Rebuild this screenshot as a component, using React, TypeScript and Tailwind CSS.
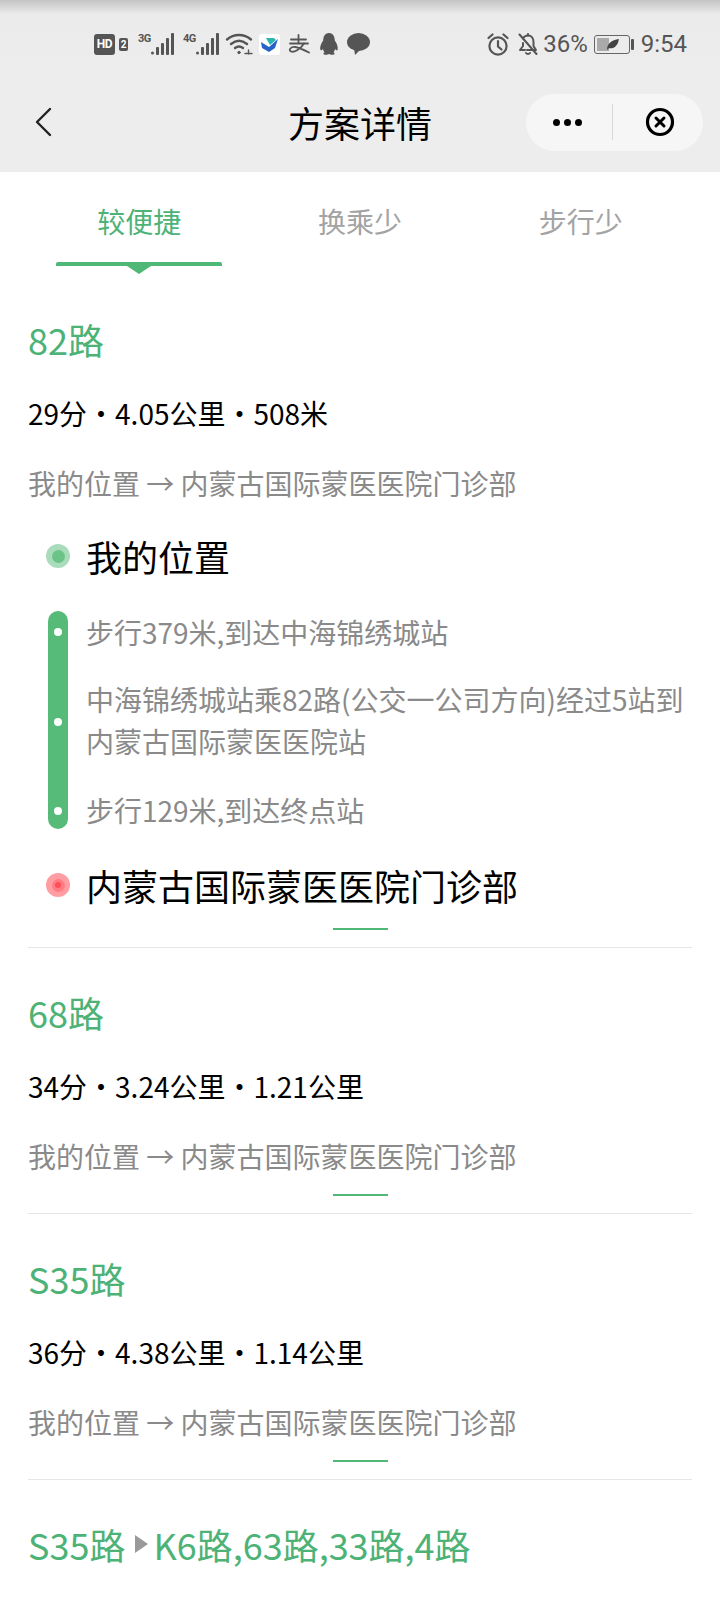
import React from 'react';

const SignalBars = ({ label }: { label: string }) => (
  <div className="flex items-start">
    <span className="mt-[-1px] w-[13px] font-['Roboto',sans-serif] text-[11px] leading-[14px] font-bold tracking-[-0.5px] text-[#555]">
      {label}
    </span>
    <svg width="23" height="22" viewBox="0 0 23 22" fill="#555">
      <circle cx="1.5" cy="20" r="1.5" />
      <rect x="5" y="14" width="3" height="8" rx="1" />
      <rect x="10" y="10" width="3" height="12" rx="1" />
      <rect x="15" y="5" width="3" height="17" rx="1" />
      <rect x="20" y="0" width="3" height="22" rx="1" />
    </svg>
  </div>
);

const StatusBar = () => (
  <div className="flex h-[79px] bg-gradient-to-b from-[#c4c4c4] from-0% via-[#ebebeb] via-[18%] to-[#ededed] to-100% pt-[33px] pl-[94px] pr-[33px]">
    <div className="flex h-[22px] items-center">
      <span className="flex h-[21px] w-[21px] items-center justify-center rounded-[3px] bg-[#555] font-['Roboto',sans-serif] text-[12px] font-bold tracking-[-0.5px] text-white">
        HD
      </span>
      <span className="ml-[4px] flex h-[13px] w-[9px] items-center justify-center rounded-[2px] bg-[#555] font-['Roboto',sans-serif] text-[10px] font-bold text-white">
        2
      </span>
      <div className="ml-[10px]">
        <SignalBars label="3G" />
      </div>
      <div className="ml-[9px]">
        <SignalBars label="4G" />
      </div>
      <svg className="ml-[6px]" width="28" height="22" viewBox="0 0 28 22" fill="none" stroke="#555" strokeWidth="2.4" strokeLinecap="round">
        <path d="M2 6.5C9 0.5 19 0.5 26 6.5" />
        <path d="M6 11C11 7 17 7 22 11" />
        <path d="M10 15C12.5 13 15.5 13 18 15" />
        <circle cx="14" cy="19.5" r="1.2" fill="#555" strokeWidth="1" />
        <path d="M20 20.5H27M23.5 17V21" strokeWidth="1.4" />
      </svg>
      <div className="ml-[6px] flex h-[21px] w-[21px] items-center justify-center rounded-[3px] bg-white">
        <svg width="17" height="15" viewBox="0 0 17 15">
          <path d="M0 5L8 10L17 2L14 11L8 15L1 11Z" fill="#2563c9" />
          <path d="M5 1L13 1L15 3L9 8Z" fill="#2bb5b0" />
        </svg>
      </div>
      <svg className="ml-[8px]" width="22" height="20" viewBox="0 0 22 20" fill="none" stroke="#555" strokeWidth="1.8" strokeLinecap="round">
        <path d="M3 5.5H18M10.5 1V9M2 9.5H20" />
        <path d="M16 9.5C12 16 6 18.5 3 17.5C0 16 3 12.5 7 13C11 13.5 16 16 21 18.5" />
      </svg>
      <svg className="ml-[9px]" width="20" height="22" viewBox="0 0 20 22" fill="#555">
        <path d="M10 0C14.5 0 15.6 4 15.8 7.5C17.5 10 19.5 14 18.5 17C17.5 18 16.5 16.5 16 16C15.8 17.5 15.2 18.5 14.5 19.2C16 20 16 21.6 14 21.8C12 22 10.8 21 10 21C9.2 21 8 22 6 21.8C4 21.6 4 20 5.5 19.2C4.8 18.5 4.2 17.5 4 16C3.5 16.5 2.5 18 1.5 17C0.5 14 2.5 10 4.2 7.5C4.4 4 5.5 0 10 0Z" />
      </svg>
      <svg className="ml-[8px]" width="23" height="22" viewBox="0 0 23 22" fill="#555">
        <ellipse cx="11.5" cy="9" rx="11.5" ry="9" />
        <path d="M7 15L8 22L14 16Z" />
      </svg>
    </div>
    <div className="ml-auto flex h-[22px] items-center font-['Roboto',sans-serif] text-[24px] text-[#555]">
      <svg width="22" height="23" viewBox="0 0 22 23" fill="none" stroke="#555" strokeWidth="2.2" strokeLinecap="round">
        <circle cx="11" cy="13" r="8.6" />
        <path d="M11 8V13.5L14.5 16.5M1.5 5L5.5 1.5M20.5 5L16.5 1.5" />
      </svg>
      <svg className="ml-[9px]" width="20" height="22" viewBox="0 0 20 22" fill="none" stroke="#555" strokeWidth="2" strokeLinecap="round" strokeLinejoin="round">
        <path d="M5 5.5C6 3.5 8 2.5 10 2.5C13.5 2.5 15.5 5.5 15.5 9V13L18 17H9M5 10V13L2 17H7" />
        <path d="M8 20C9 21.3 11 21.3 12 20M10 1V2.5M1.5 1.5L18.5 21" />
      </svg>
      <span className="ml-[5px]">36%</span>
      <div className="relative ml-[6px] h-[19px] w-[36px] rounded-[3px] border border-[#666] p-[2px]">
        <div className="h-full w-[12px] bg-[#aaa]" />
        <svg className="absolute top-[3px] left-[11px]" width="13" height="11" viewBox="0 0 14 12" fill="#444">
          <path d="M1 12C1 5 6 1 14 0C13 7 9 11 3 10Z" />
        </svg>
      </div>
      <div className="ml-[1px] h-[11px] w-[3px] rounded-[1px] bg-[#555]" />
      <span className="ml-[7px]">9:54</span>
    </div>
  </div>
);

const NavBar = () => (
  <div className="flex h-[93px] items-center bg-[#ededed] pb-[7px]">
    <div className="w-[194px] pl-[34px]">
      <svg width="18" height="30" viewBox="0 0 18 30" fill="none" stroke="#222" strokeWidth="2.4" strokeLinecap="round" strokeLinejoin="round">
        <path d="M16 2L3 15L16 28" />
      </svg>
    </div>
    <div className="flex-1 text-center text-[36px] leading-[50px] text-black">方案详情</div>
    <div className="w-[194px] pr-[17px]">
      <div className="flex h-[57px] items-center rounded-full bg-[#f6f6f6]">
        <div className="flex h-[36px] w-[87px] items-center justify-center gap-[4px] border-r border-[#d8d8d8] pr-[3px]">
          <span className="h-[7px] w-[7px] rounded-full bg-black" />
          <span className="h-[7px] w-[7px] rounded-full bg-black" />
          <span className="h-[7px] w-[7px] rounded-full bg-black" />
        </div>
        <div className="flex flex-1 justify-center pl-[4px]">
          <svg width="30" height="30" viewBox="0 0 30 30" fill="none" stroke="#000">
            <circle cx="15" cy="15" r="12.5" strokeWidth="3.2" />
            <path d="M11 11L19 19M19 11L11 19" strokeWidth="3" strokeLinecap="round" />
          </svg>
        </div>
      </div>
    </div>
  </div>
);

const Tabs = () => (
  <div className="grid h-[102px] grid-cols-3 px-[29px] text-center text-[28px] leading-[40px] text-[#a3a3a3]">
    <div className="flex flex-col items-center pt-[29px]">
      <span className="text-[#4db276]">较便捷</span>
      <div className="mt-[21px] h-[4px] w-[166px] rounded-t-[2px] bg-[#4fb877]" />
      <svg width="24" height="8" viewBox="0 0 24 8" fill="#4fb877">
        <path d="M0 0H24L12 8Z" />
      </svg>
    </div>
    <div className="pt-[29px]">换乘少</div>
    <div className="pt-[29px]">步行少</div>
  </div>
);

const RouteCard = ({
  title,
  meta,
  children,
}: {
  title: React.ReactNode;
  meta: string;
  children?: React.ReactNode;
}) => (
  <div>
    <div className="text-[36px] leading-[50px] text-[#4db276]">{title}</div>
    <div className="mt-[29px] text-[28px] leading-[40px] text-black">{meta}</div>
    <div className="mt-[30px] text-[28px] leading-[40px] text-[#8a8a8a]">我的位置 → 内蒙古国际蒙医医院门诊部</div>
    {children}
    <div className="mx-auto mt-[18px] mb-[17px] h-[2px] w-[55px] bg-[#4fb877]" />
  </div>
);

const RouteDetail = () => (
  <div className="pl-[18px]">
    <div className="mt-[28px] flex items-center text-[36px] leading-[50px] text-black">
      <span className="flex h-[24px] w-[24px] items-center justify-center rounded-full bg-[#a9dcba]">
        <span className="h-[13px] w-[13px] rounded-full bg-[#6cc388]" />
      </span>
      <span className="ml-[16px]">我的位置</span>
    </div>
    <div className="mt-[30px] flex pl-[2px]">
      <div className="mb-[2px] flex w-[20px] flex-col items-center justify-between rounded-full bg-[#56bb78] pt-[17px] pb-[14px]">
        <span className="h-[8px] w-[8px] rounded-full bg-white" />
        <span className="h-[8px] w-[8px] rounded-full bg-white" />
        <span className="h-[8px] w-[8px] rounded-full bg-white" />
      </div>
      <div className="ml-[18px] flex w-[610px] flex-col text-[28px] leading-[42px] text-[#8a8a8a]">
        <div>步行379米,到达中海锦绣城站</div>
        <div className="mt-[25px]">中海锦绣城站乘82路(公交一公司方向)经过5站到内蒙古国际蒙医医院站</div>
        <div className="mt-[27px]">步行129米,到达终点站</div>
      </div>
    </div>
    <div className="mt-[29px] flex items-center text-[36px] leading-[50px] text-black">
      <span className="flex h-[24px] w-[24px] items-center justify-center rounded-full bg-[#ff9da2]">
        <span className="flex h-[13px] w-[13px] items-center justify-center rounded-full bg-[#ff7c84]">
          <span className="h-[6px] w-[6px] rounded-full bg-[#ff4f5a]" />
        </span>
      </span>
      <span className="ml-[16px]">内蒙古国际蒙医医院门诊部</span>
    </div>
  </div>
);

const App = () => {
  return (
    <div className="h-[1600px] w-[720px] overflow-hidden bg-white font-['Noto_Sans_CJK_SC','Noto_Sans',sans-serif]">
      <StatusBar />
      <NavBar />
      <Tabs />
      <div className="px-[28px] pt-[40px]">
        <RouteCard title="82路" meta="29分・4.05公里・508米">
          <RouteDetail />
        </RouteCard>
        <div className="mb-[39px] h-px bg-[#e6e6e6]" />
        <RouteCard title="68路" meta="34分・3.24公里・1.21公里" />
        <div className="mb-[39px] h-px bg-[#e6e6e6]" />
        <RouteCard title="S35路" meta="36分・4.38公里・1.14公里" />
        <div className="mb-[39px] h-px bg-[#e6e6e6]" />
        <div className="flex items-center text-[36px] leading-[50px] text-[#4db276]">
          <span>S35路</span>
          <svg className="mr-[5px] ml-[10px]" width="13" height="18" viewBox="0 0 13 18" fill="#9a9a9a">
            <path d="M0 0L13 9L0 18Z" />
          </svg>
          <span>K6路,63路,33路,4路</span>
        </div>
      </div>
    </div>
  );
};

export default App;
